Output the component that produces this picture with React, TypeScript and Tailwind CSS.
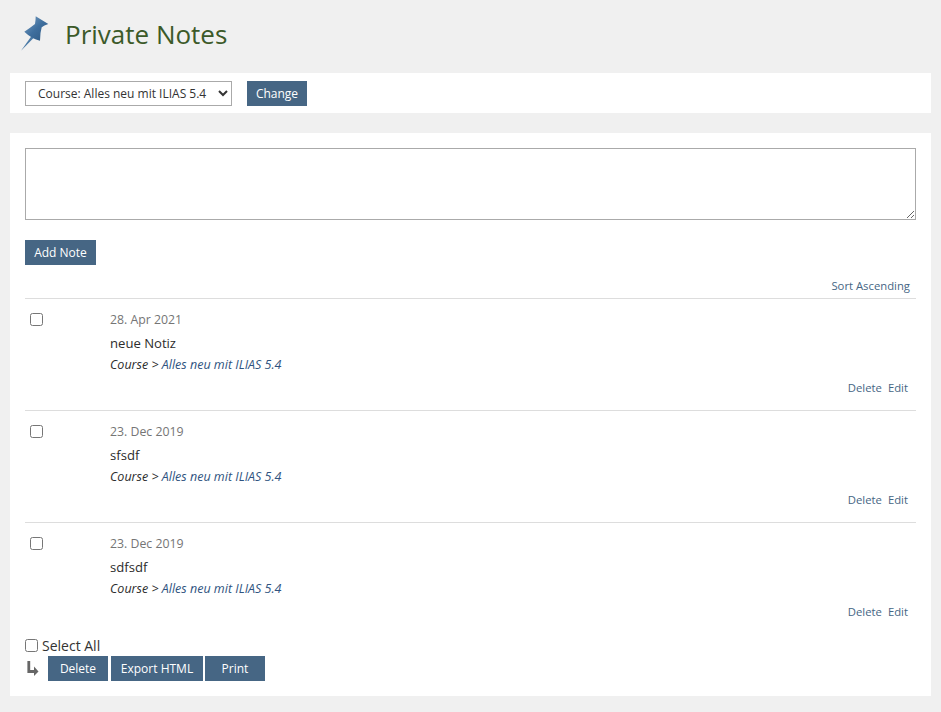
const notes = [
  { date: "28. Apr 2021", text: "neue Notiz" },
  { date: "23. Dec 2019", text: "sfsdf" },
  { date: "23. Dec 2019", text: "sdfsdf" },
];

function Btn({ label, className = "" }: { label: string; className?: string }) {
  return (
    <button className={`h-[25px] bg-[#466684] text-white text-[12px] font-medium text-center ${className}`}>
      {label}
    </button>
  );
}

function PinIcon() {
  return (
    <svg width="30" height="38" viewBox="0 0 30 38" className="block">
      <defs>
        <linearGradient id="pin" x1="0" y1="0" x2="1" y2="1">
          <stop offset="0" stopColor="#7ea3c4" />
          <stop offset="0.5" stopColor="#3f6f9e" />
          <stop offset="1" stopColor="#2c5680" />
        </linearGradient>
      </defs>
      <path d="M1 35.7 L11.7 20.7 L13.3 23.3 Z" fill="#4b7aa6" />
      <path d="M15.7 1.3 L28.3 9 Q24 10.5 21.7 12.3 Q20 18 20 25.7 Q12 24 4.3 16.7 Q10 13 15 9 Q15.7 5 15.7 1.3 Z" fill="url(#pin)" />
    </svg>
  );
}

export default function App() {
  return (
    <div className="min-h-[712px] bg-[#f0f0f0] px-[10px] font-['Open_Sans',sans-serif] text-[#161616]">
      <div className="h-[73px] flex items-center pl-[10px] pb-[5px]">
        <PinIcon />
        <h1 className="ml-[15px] text-[26px] leading-[30px] text-[#3c5a29]">Private Notes</h1>
      </div>

      <div className="h-[40px] bg-white flex items-center pl-[15px]">
        <select className="w-[207px] h-[25px] border border-[#aaaaaa] bg-white text-[12px] text-[#333] pl-[8px] font-['Open_Sans',sans-serif]" style={{ appearance: "auto" }}>
          <option>Course: Alles neu mit ILIAS 5.4</option>
        </select>
        <Btn label="Change" className="ml-[15px] w-[60px] pt-[1px]" />
      </div>

      <div className="mt-[20px] h-[563px] bg-white px-[15px] pt-[15px]">
        <textarea className="block w-full h-[72px] border border-[#aaaaaa] resize-y" />
        <Btn label="Add Note" className="block mt-[20px] w-[71px]" />

        <div className="h-[33px] flex items-end justify-end pr-[6px] pb-[5px]">
          <a className="text-[11.3px] leading-[15px] text-[#466684]">Sort Ascending</a>
        </div>

        {notes.map((note, idx) => (
          <div key={idx} className="h-[112px] border-t border-[#dddddd] flex">
            <div className="w-[85px] pl-[5px] pt-[14px]">
              <input type="checkbox" className="block w-[13px] h-[13px]" style={{ appearance: "auto" }} />
            </div>
            <div className="flex-1 pt-[12px]">
              <div className="text-[12.3px] leading-[17px] text-[#757575]">{note.date}</div>
              <div className="mt-[6px] text-[13.1px] leading-[18px] text-[#2c2c2c]">{note.text}</div>
              <div className="mt-[4px] text-[12.5px] leading-[17px] italic text-[#2c2c2c]">
                Course &gt; <a className="text-[#2f5380]">Alles neu mit ILIAS 5.4</a>
              </div>
              <div className="mt-[7px] flex justify-end gap-[6px] pr-[8px] text-[11.3px] leading-[15px] text-[#466684]">
                <a>Delete</a>
                <a>Edit</a>
              </div>
            </div>
          </div>
        ))}

        <div className="mt-[3px] flex items-center h-[18px]">
          <input type="checkbox" className="block w-[13px] h-[13px] -mt-[1px]" style={{ appearance: "auto" }} />
          <span className="ml-[4px] text-[14px] leading-[18px] text-[#333]">Select All</span>
        </div>
        <div className="flex items-center mt-[1px]">
          <svg width="14" height="16" viewBox="0 0 14 16" className="ml-[1px] mr-[8px]">
            <path d="M2.8 0 V10.5 H8" fill="none" stroke="#666" strokeWidth="2.8" />
            <path d="M8 5.5 L12.5 10.5 L8 15 Z" fill="#666" />
          </svg>
          <Btn label="Delete" className="w-[60px]" />
          <Btn label="Export HTML" className="ml-[3px] w-[92px]" />
          <Btn label="Print" className="ml-[2px] w-[60px]" />
        </div>
      </div>
    </div>
  );
}
